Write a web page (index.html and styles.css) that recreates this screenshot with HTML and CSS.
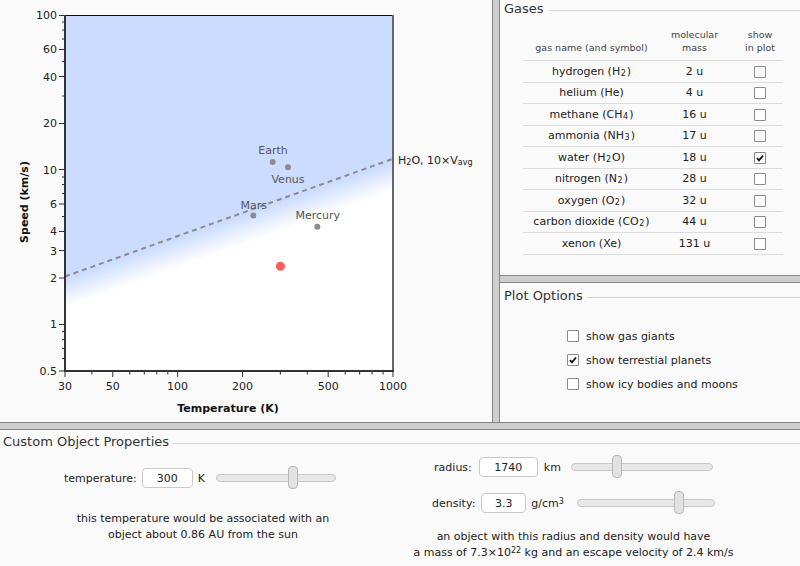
FILE: index.html
```html
<!DOCTYPE html>
<html>
<head>
<meta charset="utf-8">
<title>Atmospheric Retention</title>
<link rel="stylesheet" href="styles.css">
</head>
<body>
<div class="app">
  <div class="top">
    <div class="chart-panel">
      <svg class="chart" width="492" height="422" viewBox="0 0 492 422">
        <defs>
          <linearGradient id="fade" gradientUnits="userSpaceOnUse" x1="65.7" y1="278.4" x2="75.1" y2="304.7">
            <stop offset="0" stop-color="#ccdcff"/>
            <stop offset="1" stop-color="#ffffff"/>
          </linearGradient>
        </defs>
        <rect x="65" y="15" width="328" height="356" fill="url(#fade)"/>
        <line class="dash" x1="65" y1="276.5" x2="394" y2="158.4"/>
        <line class="frame-top" x1="65" y1="15.5" x2="393" y2="15.5"/>
        <line class="frame-right" x1="393" y1="15" x2="393" y2="372"/>
        <line class="axis" x1="65" y1="15" x2="65" y2="372"/>
        <line class="axis" x1="64" y1="371" x2="394" y2="371"/>
        <path class="ticks" d="M59 15.5H65M59 49.5H65M59 76.5H65M59 123.5H65M59 169.5H65M59 204H65M59 231.5H65M59 250.5H65M59 278H65M59 324.5H65M59 371H65M62 22H65M62 30H65M62 39H65M62 61.5H65M62 96H65M62 177H65M62 184.5H65M62 193.5H65M62 216.5H65M62 331.5H65M62 339.5H65M62 348.5H65M62 358.5H65M65 371V377M112.8 371V377M177.6 371V377M242.5 371V377M328.2 371V377M393 371V377M91.9 371V374.5M129.8 371V374.5M144.3 371V374.5M156.8 371V374.5M167.8 371V374.5M280.4 371V374.5M307.3 371V374.5M345.2 371V374.5M359.6 371V374.5M372.1 371V374.5M383.1 371V374.5"/>
        <g class="ylabels">
          <text x="57" y="19">100</text>
          <text x="57" y="53.3">60</text>
          <text x="57" y="80.5">40</text>
          <text x="57" y="127">20</text>
          <text x="57" y="173.7">10</text>
          <text x="57" y="208">6</text>
          <text x="57" y="235.3">4</text>
          <text x="57" y="254.6">3</text>
          <text x="57" y="281.8">2</text>
          <text x="57" y="328.4">1</text>
          <text x="57" y="375">0.5</text>
        </g>
        <g class="xlabels">
          <text x="65" y="390">30</text>
          <text x="112.8" y="390">50</text>
          <text x="177.6" y="390">100</text>
          <text x="242.5" y="390">200</text>
          <text x="328.2" y="390">500</text>
          <text x="393" y="390">1000</text>
        </g>
        <text class="axis-title" x="228" y="412">Temperature (K)</text>
        <text class="axis-title" transform="translate(28 202) rotate(-90)">Speed (km/s)</text>
        <g class="planets">
          <circle cx="272.7" cy="162" r="3"/>
          <circle cx="288" cy="167.3" r="3"/>
          <circle cx="253.3" cy="215.5" r="3"/>
          <circle cx="317.3" cy="226.7" r="3"/>
        </g>
        <g class="planet-labels">
          <text x="273" y="154">Earth</text>
          <text x="288" y="182.7">Venus</text>
          <text x="253.7" y="208.5">Mars</text>
          <text x="317.8" y="219">Mercury</text>
        </g>
        <circle class="custom-dot" cx="280.4" cy="266.2" r="4.5"/>
        <text class="curve-label" x="398" y="163.5">H<tspan class="sub" dy="1">2</tspan><tspan dy="-1">O, 10×V</tspan><tspan class="sub" dy="1.5">avg</tspan></text>
      </svg>
    </div>
    <div class="vsplit"></div>
    <div class="side">
      <section class="gases">
        <div class="legend legend-gases">Gases</div>
        <table class="gas-table">
          <thead>
            <tr>
              <th class="c-name">gas name (and symbol)</th>
              <th class="c-mass">molecular<br>mass</th>
              <th class="c-show">show<br>in plot</th>
            </tr>
          </thead>
          <tbody>
            <tr><td class="c-name">hydrogen (H<sub>2</sub>)</td><td class="c-mass">2 u</td><td class="c-show"><span class="cb"></span></td></tr>
            <tr><td class="c-name">helium (He)</td><td class="c-mass">4 u</td><td class="c-show"><span class="cb"></span></td></tr>
            <tr><td class="c-name">methane (CH<sub>4</sub>)</td><td class="c-mass">16 u</td><td class="c-show"><span class="cb"></span></td></tr>
            <tr><td class="c-name">ammonia (NH<sub>3</sub>)</td><td class="c-mass">17 u</td><td class="c-show"><span class="cb"></span></td></tr>
            <tr><td class="c-name">water (H<sub>2</sub>O)</td><td class="c-mass">18 u</td><td class="c-show"><span class="cb checked"><svg viewBox="0 0 12 12" width="10" height="10"><path d="M2.3 6.2 L4.8 8.8 L9.6 3"/></svg></span></td></tr>
            <tr><td class="c-name">nitrogen (N<sub>2</sub>)</td><td class="c-mass">28 u</td><td class="c-show"><span class="cb"></span></td></tr>
            <tr><td class="c-name">oxygen (O<sub>2</sub>)</td><td class="c-mass">32 u</td><td class="c-show"><span class="cb"></span></td></tr>
            <tr><td class="c-name">carbon dioxide (CO<sub>2</sub>)</td><td class="c-mass">44 u</td><td class="c-show"><span class="cb"></span></td></tr>
            <tr><td class="c-name">xenon (Xe)</td><td class="c-mass">131 u</td><td class="c-show"><span class="cb"></span></td></tr>
          </tbody>
        </table>
      </section>
      <div class="hsplit"></div>
      <section class="options">
        <div class="legend legend-options">Plot Options</div>
        <ul class="option-list">
          <li><span class="cb"></span>show gas giants</li>
          <li><span class="cb checked"><svg viewBox="0 0 12 12" width="10" height="10"><path d="M2.3 6.2 L4.8 8.8 L9.6 3"/></svg></span>show terrestial planets</li>
          <li><span class="cb"></span>show icy bodies and moons</li>
        </ul>
      </section>
    </div>
  </div>
  <div class="hsplit"></div>
  <section class="custom">
    <div class="legend legend-custom">Custom Object Properties</div>
    <div class="custom-grid">
      <div class="col col-left">
        <div class="row">
          <span class="lbl">temperature:</span>
          <input class="num w51" type="text" value="300">
          <span class="unit u-k">K</span>
          <div class="track w120"><div class="thumb" style="left:71px"></div></div>
        </div>
        <p class="note note-left">this temperature would be associated with an<br>object about 0.86 AU from the sun</p>
      </div>
      <div class="col col-right">
        <div class="row">
          <span class="lbl">radius:</span>
          <input class="num w59 m7" type="text" value="1740">
          <span class="unit u-km">km</span>
          <div class="track w142"><div class="thumb" style="left:40px"></div></div>
        </div>
        <div class="row row2">
          <span class="lbl">density:</span>
          <input class="num w45 m6" type="text" value="3.3">
          <span class="unit u-g">g/cm<sup>3</sup></span>
          <div class="track w138"><div class="thumb" style="left:96px"></div></div>
        </div>
        <p class="note note-right">an object with this radius and density would have<br>a mass of 7.3×10<sup>22</sup> kg and an escape velocity of 2.4 km/s</p>
      </div>
    </div>
  </section>
</div>
</body>
</html>
```

FILE: styles.css
```css
* { box-sizing: border-box; }
html, body { margin: 0; padding: 0; }
body {
  width: 800px;
  height: 566px;
  overflow: hidden;
  background: #fafafa;
  font-family: "DejaVu Sans", Verdana, sans-serif;
  font-size: 11px;
  color: #222;
}
.app { display: flex; flex-direction: column; height: 566px; }
.top { display: flex; height: 422px; flex: none; }
.chart-panel { width: 492px; height: 422px; flex: none; }
.chart { display: block; font-family: "DejaVu Sans", Verdana, sans-serif; }

/* chart */
.dash { stroke: #8f8b88; stroke-width: 2; stroke-dasharray: 5 4; }
.frame-top { stroke: #111; stroke-width: 1; }
.frame-right { stroke: #666; stroke-width: 2; }
.axis { stroke: #333; stroke-width: 2; }
.ticks { stroke: #333; stroke-width: 1; fill: none; }
.ylabels text { font-size: 11px; fill: #222; text-anchor: end; }
.xlabels text { font-size: 11px; fill: #222; text-anchor: middle; }
.axis-title { font-size: 11px; font-weight: bold; fill: #111; text-anchor: middle; }
.planets circle { fill: #8c8c8c; }
.planet-labels text { font-size: 11px; fill: #555; text-anchor: middle; }
.custom-dot { fill: #ff5c5c; }
.curve-label { font-size: 11px; fill: #222; }
.curve-label .sub { font-size: 8px; }

/* splitters */
.vsplit {
  width: 8px; flex: none;
  background: #cecece;
  border-left: 1px solid #858585;
  border-right: 1px solid #858585;
}
.hsplit {
  height: 8px; flex: none;
  background: #cecece;
  border-top: 1px solid #858585;
  border-bottom: 1px solid #858585;
}
.side { flex: 1; display: flex; flex-direction: column; }

/* legends */
.legend {
  display: flex;
  align-items: center;
  gap: 4px;
  font-size: 13px;
  line-height: 16px;
  color: #333;
}
.legend::after {
  content: "";
  flex: 1;
  height: 1px;
  margin-top: 2px;
  background: #d6d6d6;
}
.legend-gases { padding-left: 4px; gap: 5px; }
.legend-options { padding-left: 4px; }
.legend-custom { padding-left: 3px; }

/* gases */
.gases { height: 275px; flex: none; padding-top: 1px; }
.gas-table {
  border-collapse: collapse;
  margin: 11px 0 0 23px;
  table-layout: fixed;
  width: 260px;
}
.gas-table th {
  font-size: 9.5px;
  font-weight: normal;
  color: #444;
  line-height: 13px;
  vertical-align: bottom;
  padding: 0 0 6px;
  border-bottom: 1px solid #dcdcdc;
}
.gas-table td {
  height: 21.5px;
  padding: 1px 0 0;
  text-align: center;
  vertical-align: middle;
  border-bottom: 1px solid #dcdcdc;
  line-height: 14px;
}
.c-name { width: 137px; text-align: center; }
.c-mass { width: 69px; text-align: center; }
.c-show { width: 54px; padding-left: 8px !important; text-align: center; }
.gas-table td.c-show { font-size: 0; }
sub { font-size: 8px; line-height: 0; vertical-align: -1px; padding: 0 1px 0 0.5px; }
sup { font-size: 8px; line-height: 0; vertical-align: 3px; }

.cb {
  display: inline-block;
  width: 12px;
  height: 12px;
  border: 1px solid #8a8a8a;
  border-radius: 1px;
  background: #fff;
  vertical-align: middle;
  position: relative;
}
.cb svg { display: block; }
.cb svg path { fill: none; stroke: #111; stroke-width: 2.2; }

/* options */
.options { flex: 1; padding-top: 5px; }
.option-list {
  list-style: none;
  margin: 20px 0 0 67px;
  padding: 0;
}
.option-list li {
  display: flex;
  align-items: center;
  height: 24px;
  gap: 7px;
}

/* custom */
.custom { flex: 1; padding-top: 4px; }
.custom-grid {
  display: grid;
  grid-template-columns: 400px 347px;
  align-items: start;
}
.col-left { padding-top: 18px; }
.col-right { padding-top: 7px; }
.row {
  display: flex;
  align-items: center;
  justify-content: center;
  height: 20px;
}
.row2 { margin-top: 16px; }
.lbl { white-space: nowrap; }
.num {
  height: 20px;
  padding: 0;
  margin: 0 0 0 5px;
  border: 1px solid #c9c9c9;
  border-radius: 4px;
  background: #fff;
  font-family: "DejaVu Sans", Verdana, sans-serif;
  font-size: 11px;
  color: #222;
  text-align: center;
  outline: none;
}
.w51 { width: 51px; }
.w59 { width: 59px; }
.w45 { width: 45px; }
.m7 { margin-left: 7px; }
.m6 { margin-left: 6px; }
.unit { margin-left: 5px; white-space: nowrap; }
.u-k { margin-right: 11px; }
.u-km { margin-left: 6px; margin-right: 10px; }
.u-g { margin-right: 13px; }
.track {
  position: relative;
  height: 8px;
  border: 1px solid #c9c9c9;
  border-radius: 4px;
  background: #e8e8e8;
}
.w120 { width: 120px; }
.w142 { width: 142px; }
.w138 { width: 138px; }
.thumb {
  position: absolute;
  top: -9px;
  width: 10px;
  height: 23px;
  border: 1px solid #b8b8b8;
  border-radius: 4px;
  background: #e2e2e2;
}
.note {
  margin: 0;
  text-align: center;
  line-height: 16px;
}
.note-left { margin-top: 23px; padding-left: 6px; }
.note-right { margin-top: 16px; }
```
